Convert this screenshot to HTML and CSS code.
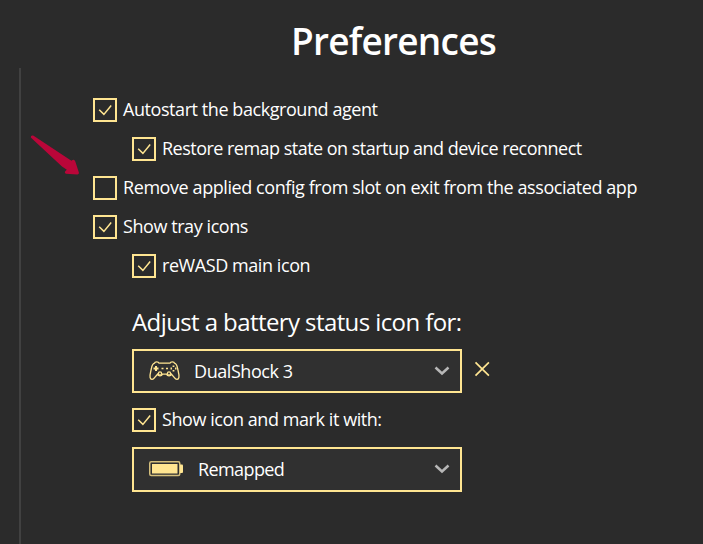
FILE: index.html
```html
<!DOCTYPE html>
<html lang="en">
<head>
    <meta charset="UTF-8">
    <meta name="viewport" content="width=device-width, initial-scale=1.0">
    <title>Preferences</title>
    <link rel="stylesheet" href="styles.css">
</head>
<body>
<h1>Preferences</h1>
<div class="container">
    <div class="option">
        <span class="checkbox"><svg width="20" height="20" viewBox="0 0 20 20"><path d="M4.2 9.7l4.7 4.7 7.3-8.8"/></svg></span>
        <span class="label">Autostart the background agent</span>
    </div>
    <div class="option nested">
        <span class="checkbox"><svg width="20" height="20" viewBox="0 0 20 20"><path d="M4.2 9.7l4.7 4.7 7.3-8.8"/></svg></span>
        <span class="label restore">Restore remap state on startup and device reconnect</span>
    </div>
    <div class="option">
        <span class="checkbox"></span>
        <span class="label remove">Remove applied config from slot on exit from the associated app</span>
    </div>
    <div class="option">
        <span class="checkbox"><svg width="20" height="20" viewBox="0 0 20 20"><path d="M4.2 9.7l4.7 4.7 7.3-8.8"/></svg></span>
        <span class="label">Show tray icons</span>
    </div>
    <div class="option nested">
        <span class="checkbox"><svg width="20" height="20" viewBox="0 0 20 20"><path d="M4.2 9.7l4.7 4.7 7.3-8.8"/></svg></span>
        <span class="label">reWASD main icon</span>
    </div>
    <div class="battery">
        <h2>Adjust a battery status icon for:</h2>
        <div class="device-row">
            <div class="select">
                <svg class="gamepad" width="32" height="22" viewBox="0 0 32 22">
                    <path d="M5.500 3.200C5.800 1.300 9.500 1.300 10 3.200H21C21.500 1.300 25.200 1.300 25.500 3.200C27.500 3.800 28.200 6 28.700 9C29.500 12.500 30.400 15 29.900 17.500C29.400 20 26.900 20 25.400 17.700L22.500 14.300C21.500 16.500 18.500 16.500 17.500 14.200H13.500C12.500 16.500 9.500 16.500 8.500 14.300L5.600 17.700C4.100 20 1.600 20 1.100 17.500C.6 15 1.500 12.500 2.300 9C2.800 6 3.500 3.800 5.500 3.200Z"/>
                    <path class="pad" d="M7 6v5M4.500 8.500h5"/>
                    <path class="marks" d="M12.500 8.500h2M17 8.500h2"/>
                    <path class="buttons" d="M24.500 5.500v1.500M24.500 10v1.500M21.500 8.500h1.500M26 8.500h1.500"/>
                    <circle cx="11" cy="13.500" r="1.600"/>
                    <circle cx="20" cy="13.500" r="1.600"/>
                </svg>
                <span class="value">DualShock 3</span>
                <svg class="chevron" width="16" height="10" viewBox="0 0 16 10"><path d="M1.500 1.500l6.500 6 6.500-6"/></svg>
            </div>
            <svg class="remove-device" width="16" height="16" viewBox="0 0 16 16"><path d="M1.500 1.300l13.400 13.400M14.900 1.300L1.500 14.700"/></svg>
        </div>
        <div class="option">
            <span class="checkbox"><svg width="20" height="20" viewBox="0 0 20 20"><path d="M4.2 9.7l4.7 4.7 7.3-8.8"/></svg></span>
            <span class="label">Show icon and mark it with:</span>
        </div>
        <div class="select mode">
            <svg class="charge" width="35" height="16" viewBox="0 0 35 16">
                <rect class="case" x="0.750" y="0.750" width="30" height="13.800" rx="1.500"/>
                <rect class="fill" x="3" y="3" width="25.500" height="9.500"/>
                <path class="fill" d="M31 3.500h2q1 0 1 1v6.500q0 1-1 1h-2z"/>
            </svg>
            <span class="value remapped">Remapped</span>
            <svg class="chevron" width="16" height="10" viewBox="0 0 16 10"><path d="M1.500 1.500l6.500 6 6.500-6"/></svg>
        </div>
    </div>
</div>
<svg class="arrow" width="52" height="44" viewBox="0 0 52 44">
    <path d="M0.800 3.500Q0.500 1 3.200 1.500L39.500 25.500L41.500 26.800L42.500 26Q44.500 25 45.300 27.500L48.900 38.500Q49.200 40.700 47 40.500L36 39.700Q34 38.700 35.500 37L36.800 35.700L32 32.500Z"/>
</svg>
</body>
</html>
```

FILE: styles.css
```css
* {
    box-sizing: border-box;
}
body {
    font-family: "Open Sans", "Noto Sans", sans-serif;
    background-color: #2b2b2b;
    color: #fff;
    margin: 0;
    height: 544px;
    display: flex;
    flex-direction: column;
    overflow: hidden;
}
h1 {
    margin: 0;
    padding: 16px 0 0 291px;
    height: 68px;
    font-size: 37px;
    line-height: 50px;
    font-weight: 600;
    letter-spacing: -0.75px;
    white-space: nowrap;
}
.container {
    flex-grow: 1;
    margin-left: 19px;
    padding: 30px 0 0 72px;
    border-left: 2px solid #414141;
}
.option {
    display: flex;
    align-items: center;
    gap: 6px;
    height: 24px;
    margin-bottom: 15px;
}
.nested {
    margin-left: 39px;
}
.checkbox {
    flex: none;
    width: 24px;
    height: 24px;
    border: 2px solid #ffe591;
}
.checkbox svg {
    display: block;
    stroke-width: 1.500;
}
.label, .value {
    font-size: 18px;
    line-height: 24px;
    letter-spacing: -0.43px;
    white-space: nowrap;
}
.label {
    padding-bottom: 2px;
}
.restore {
    letter-spacing: -0.52px;
}
.remove {
    letter-spacing: -0.42px;
}
svg {
    flex: none;
    fill: none;
    stroke: #ffe591;
    stroke-width: 1.500;
}
.battery {
    margin-left: 39px;
}
h2 {
    margin: 0;
    padding-top: 13px;
    height: 56px;
    font-size: 24px;
    line-height: 32px;
    font-weight: 400;
    letter-spacing: -0.59px;
    white-space: nowrap;
}
.device-row {
    display: flex;
    align-items: center;
    gap: 12px;
    margin-bottom: 15px;
}
.select {
    display: flex;
    align-items: center;
    width: 330px;
    height: 44px;
    padding: 0 10px 0 15px;
    background-color: #303030;
    border: 2px solid #ffe591;
}
.mode {
    height: 45px;
}
.value {
    flex-grow: 1;
    margin-left: 13px;
}
.remapped {
    margin-left: 14px;
    letter-spacing: -0.6px;
    padding-bottom: 1px;
}
.gamepad {
    stroke-width: 1.300;
}
.chevron {
    stroke: #b7b7b7;
    stroke-width: 2.500;
    margin-bottom: 1px;
}
.mode .chevron, .charge {
    margin-bottom: 2px;
}
.remove-device {
    margin-top: -4px;
    stroke-width: 1.700;
}
.pad {
    stroke-width: 2;
}
.buttons {
    stroke-width: 1.800;
}
.case {
    stroke: #d4bf7c;
}
.fill {
    fill: #ffe591;
    stroke: none;
}
.arrow {
    position: absolute;
    left: 30px;
    top: 134px;
    fill: #ba0639;
    stroke: none;
}
```
